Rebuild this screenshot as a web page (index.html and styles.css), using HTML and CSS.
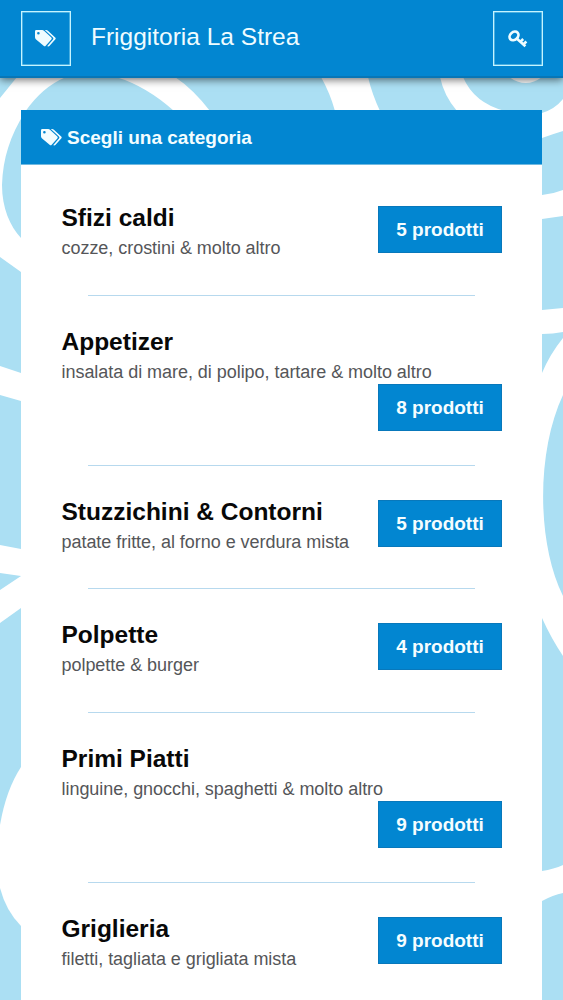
FILE: index.html
```html
<!DOCTYPE html>
<html lang="it">
<head>
<meta charset="utf-8">
<title>Friggitoria La Strea</title>
<link rel="stylesheet" href="styles.css">
</head>
<body>
<svg class="backdrop" viewBox="0 0 563 1000" aria-hidden="true">
  <g fill="#fff">
    <path d="M0 98L17 77H66Q42 87 25 112C10 136 3 158 2 185C2 208 10 226 21 238V272L0 257Z"/>
    <path d="M116 77H175Q193 89 210 111H174Q146 86 116 77Z"/>
    <path d="M321 77H368Q372 94 380 111H335Q330 93 321 77Z"/>
    <path d="M440 77H463Q474 103 505 111H457Q444 96 440 77Z"/>
    <path d="M505 111Q524 115 542 113Q555 109 563 99V131Q553 134 542 138V113Z"/>
    <path d="M509 77H542Q526 89 509 77Z"/>
    <path d="M0 366L21 373V401L0 395Z"/>
    <path d="M0 545L21 549V608L0 623V590L21 576L0 573Z"/>
    <path d="M21 767Q6 790 0 825V888Q6 911 21 926Z"/>
    <path d="M542 195Q553 194 563 190V216L542 219Z"/>
    <path d="M542 310L563 308V332Q553 334 542 334Z"/>
    <path d="M542 373Q550 354 563 338V395C537 450 536 541 563 596V656Q551 638 542 618Z"/>
    <path d="M542 871Q554 869 563 865V893Q553 895 542 901Z"/>
  </g>
</svg>
<svg class="symbols" aria-hidden="true">
  <symbol id="tags" viewBox="0 0 21 17">
    <path fill="currentColor" fill-rule="evenodd" d="M1.300 0H7.200Q8.200 0 9 .7L16.300 7.400Q17.300 8.400 16.300 9.500L10.700 15.800Q9.700 16.800 8.600 15.800L.8 9.200Q0 8.400 0 7.300V1.400Q0 0 1.300 0ZM3.400 2A1.300 1.300 0 1 0 3.400 4.600A1.300 1.300 0 1 0 3.400 2Z"/>
    <path fill="currentColor" d="M9.800 0H11.200Q12.100 0 12.900.7L20.200 7.400Q21.200 8.400 20.200 9.500L14.400 16Q13.400 17 12.300 15.900L18 9.500Q18.800 8.400 17.900 7.500Z"/>
  </symbol>
  <symbol id="key" viewBox="0 0 20 18">
    <g fill="none" stroke="currentColor">
      <ellipse cx="6" cy="5.900" rx="4.900" ry="3.800" stroke-width="2.700" transform="rotate(-43 6 5.900)"/>
      <path stroke-width="2.600" d="M8.700 8.500L17.400 16.300M12.300 11.900L15.200 9M15.200 14.500L18.400 11.500"/>
    </g>
  </symbol>
</svg>
<header class="topbar">
  <a class="icon-button"><svg class="tags"><use href="#tags"/></svg></a>
  <h1 class="brand">Friggitoria La Strea</h1>
  <a class="icon-button"><svg class="key"><use href="#key"/></svg></a>
</header>
<main class="panel">
  <h2 class="panel-title"><svg class="tags"><use href="#tags"/></svg><span>Scegli una categoria</span></h2>
  <section class="category"><div class="copy"><h3>Sfizi caldi</h3><p>cozze, crostini &amp; molto altro</p></div><a class="count">5 prodotti</a></section>
  <section class="category wide"><div class="copy"><h3>Appetizer</h3><p>insalata di mare, di polipo, tartare &amp; molto altro</p></div><a class="count">8 prodotti</a></section>
  <section class="category"><div class="copy"><h3>Stuzzichini &amp; Contorni</h3><p>patate fritte, al forno e verdura mista</p></div><a class="count">5 prodotti</a></section>
  <section class="category"><div class="copy"><h3>Polpette</h3><p>polpette &amp; burger</p></div><a class="count">4 prodotti</a></section>
  <section class="category wide"><div class="copy"><h3>Primi Piatti</h3><p>linguine, gnocchi, spaghetti &amp; molto altro</p></div><a class="count">9 prodotti</a></section>
  <section class="category"><div class="copy"><h3>Griglieria</h3><p>filetti, tagliata e grigliata mista</p></div><a class="count">9 prodotti</a></section>
</main>
</body>
</html>
```
FILE: styles.css
```css
* { box-sizing: border-box; }
html, body { height: 1000px; overflow: hidden; }
body {
  margin: 0;
  background: #abdff3;
  font-family: "Liberation Sans", Arial, sans-serif;
  color: #080808;
}
h1, h2, h3, p { margin: 0; }
.backdrop { position: absolute; z-index: -1; top: 0; left: 0; width: 563px; height: 1000px; }
.symbols { position: absolute; width: 0; height: 0; }
.topbar {
  display: flex;
  align-items: flex-start;
  height: 78px;
  padding: 11px 20px 0 20.5px;
  background: #0286d1;
  border-bottom: 2px solid #0876b6;
  box-shadow: 0 2px 8px rgba(0, 0, 0, .55);
  color: #effcff;
}
.icon-button {
  display: flex;
  align-items: center;
  justify-content: center;
  width: 50px;
  height: 55px;
  border: 1px solid #c5f4ff;
  box-shadow: inset 0 0 0 .5px #8fd8f2;
}
.key { width: 20px; height: 18px; }
.brand {
  flex: 1;
  padding-left: 20.500px;
  font-size: 24.500px;
  font-weight: 400;
  line-height: 52px;
}
.panel {
  height: 890px;
  margin: 32px 21px 0;
  background: #fff;
  overflow: hidden;
}
.panel-title {
  display: flex;
  align-items: center;
  gap: 5px;
  height: 55px;
  padding-left: 20px;
  background: #0286d1;
  border-bottom: 1px solid #70b9e0;
  color: #f3fdff;
  font-size: 19px;
  line-height: 55px;
}
.tags { width: 21px; height: 17px; }
.category {
  display: flex;
  justify-content: space-between;
  position: relative;
  height: 123.600px;
  padding: 35px 40px 0 40.500px;
}
.category.wide { flex-direction: column; justify-content: flex-start; height: 170px; }
.category + .category::before {
  content: "";
  position: absolute;
  top: 6px;
  left: 67px;
  width: 387px;
  height: 1px;
  background: #b7d9ee;
}
.copy { padding-top: 4px; white-space: nowrap; }
.copy h3 { font-size: 24.500px; line-height: 28px; }
.copy p { margin-top: 5px; margin-bottom: 1px; font-size: 18px; letter-spacing: -.040px; line-height: 22px; color: #555659; }
.count {
  flex: none;
  width: 124px;
  height: 47px;
  margin-top: 6px;
  background: #0286d1;
  border: 1px solid #0878bb;
  color: #f5fdff;
  font-size: 19px;
  font-weight: 700;
  line-height: 45px;
  text-align: center;
}
.wide .count { align-self: flex-end; margin-top: 0; }
```
